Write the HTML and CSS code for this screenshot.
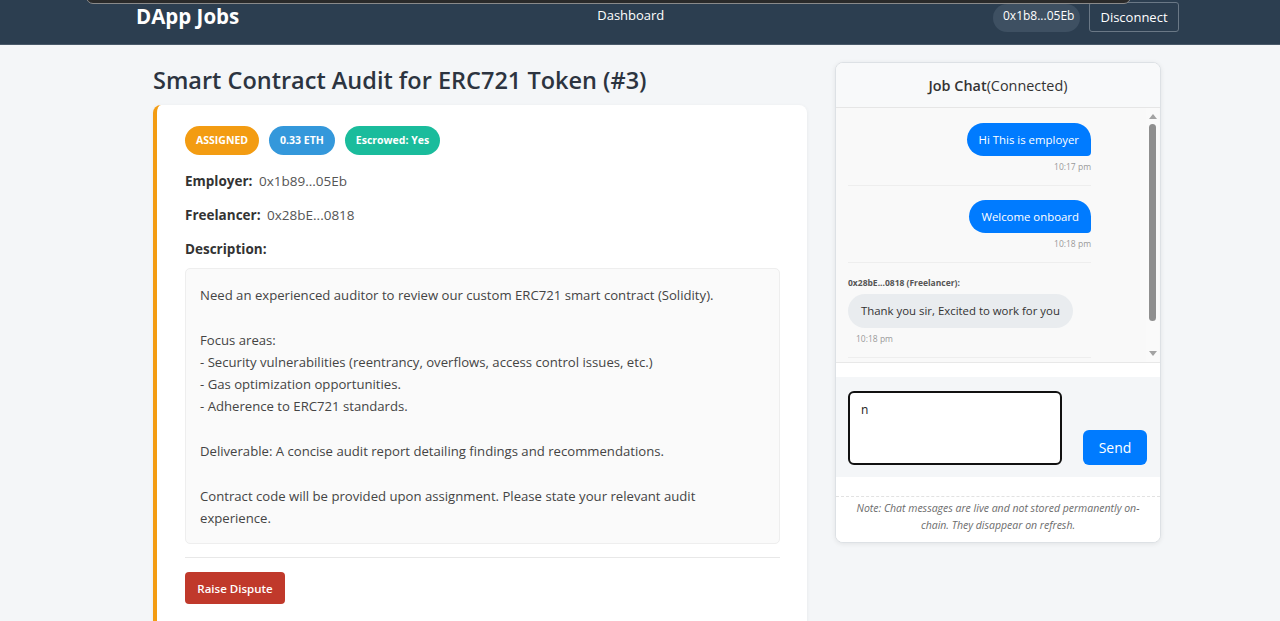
FILE: index.html
```html
<!DOCTYPE html>
<html lang="en">
<head>
<meta charset="utf-8">
<title>DApp Jobs</title>
<link rel="stylesheet" href="styles.css">
</head>
<body>
<div class="overlay-bar"></div>
<nav class="navbar">
  <div class="brand">DApp Jobs</div>
  <a class="nav-link">Dashboard</a>
  <div class="nav-right">
    <span class="addr-pill">0x1b8...05Eb</span>
    <button class="btn-disconnect">Disconnect</button>
  </div>
</nav>
<main class="page">
  <section class="job-col">
    <h1 class="job-title">Smart Contract Audit for ERC721 Token (#3)</h1>
    <div class="job-card">
      <div class="badges">
        <span class="badge badge-status">ASSIGNED</span>
        <span class="badge badge-eth">0.33 ETH</span>
        <span class="badge badge-escrow">Escrowed: Yes</span>
      </div>
      <p class="field"><strong>Employer:</strong> <span class="val">0x1b89...05Eb</span></p>
      <p class="field"><strong>Freelancer:</strong> <span class="val">0x28bE...0818</span></p>
      <p class="field field-last"><strong>Description:</strong></p>
      <div class="desc">Need an experienced auditor to review our custom ERC721 smart contract (Solidity).

Focus areas:
- Security vulnerabilities (reentrancy, overflows, access control issues, etc.)
- Gas optimization opportunities.
- Adherence to ERC721 standards.

Deliverable: A concise audit report detailing findings and recommendations.

Contract code will be provided upon assignment. Please state your relevant audit experience.</div>
      <hr class="divider">
      <button class="btn-dispute">Raise Dispute</button>
    </div>
  </section>
  <aside class="chat">
    <div class="chat-head"><strong>Job Chat</strong>(Connected)</div>
    <div class="chat-body">
      <div class="messages">
        <div class="msg msg-out">
          <div class="bubble">Hi This is employer</div>
          <div class="time">10:17 pm</div>
        </div>
        <div class="msg msg-out">
          <div class="bubble">Welcome onboard</div>
          <div class="time">10:18 pm</div>
        </div>
        <div class="msg msg-in">
          <div class="sender">0x28bE...0818 (Freelancer):</div>
          <div class="bubble">Thank you sir, Excited to work for you</div>
          <div class="time">10:18 pm</div>
        </div>
      </div>
      <div class="scrollbar">
        <span class="sb-up"></span>
        <span class="sb-thumb"></span>
        <span class="sb-down"></span>
      </div>
    </div>
    <div class="chat-gap"></div>
    <form class="chat-input">
      <textarea class="chat-text">n</textarea>
      <button type="button" class="btn-send">Send</button>
    </form>
    <div class="chat-gap2"></div>
    <p class="chat-note">Note: Chat messages are live and not stored permanently on-chain. They disappear on refresh.</p>
  </aside>
</main>
</body>
</html>
```
FILE: styles.css
```css
* { box-sizing: border-box; }
html, body { margin: 0; padding: 0; }
body {
  font-family: "Open Sans", "Noto Sans", sans-serif;
  background: #f4f6f8;
  color: #333;
  height: 621px;
  overflow: hidden;
  position: relative;
}
.overlay-bar {
  position: absolute;
  left: 86px;
  top: -10px;
  width: 1045px;
  height: 14px;
  background: #2a2a2a;
  border: 1px solid #8a8a8a;
  border-radius: 8px;
  z-index: 5;
}
.navbar {
  height: 45px;
  background: #2c3e50;
  border-bottom: 1px solid #4a5a6a;
  display: flex;
  align-items: center;
  padding: 0 101px 0 136px;
  color: #fff;
}
.brand {
  font-size: 20.5px;
  font-weight: 700;
  margin-top: -13px;
}
.nav-link {
  font-size: 13px;
  margin-left: 358px;
  margin-top: -14px;
  color: #fff;
}
.nav-right {
  margin-left: auto;
  display: flex;
  align-items: flex-start;
  gap: 9px;
  align-self: flex-start;
  margin-top: 2px;
}
.addr-pill {
  background: #3e5062;
  border-radius: 14px;
  font-size: 12px;
  padding: 4px 10px;
  height: 28px;
  line-height: 16px;
  width: 87px;
  text-align: center;
  margin-top: 2px;
}
.btn-disconnect {
  background: transparent;
  color: #fff;
  border: 1px solid #6a7886;
  border-radius: 3px;
  font-family: inherit;
  font-size: 13px;
  height: 30px;
  width: 90px;
  padding: 0;
  line-height: 24px;
}
.page {
  display: flex;
  align-items: flex-start;
  padding: 17px 0 0 153px;
  gap: 28px;
}
.job-col { width: 654px; }
.job-title {
  font-size: 23.5px;
  font-weight: 600;
  color: #2c3440;
  margin: 0 0 6px;
  line-height: 37px;
}
.job-card {
  background: #fff;
  border-left: 4px solid #f39c12;
  border-radius: 8px;
  box-shadow: 0 1px 4px rgba(0,0,0,0.06);
  padding: 21px 27px 40px 28px;
}
.badges { display: flex; gap: 10px; margin-bottom: 16px; }
.badge {
  display: inline-block;
  color: #fff;
  font-size: 10.5px;
  font-weight: 700;
  height: 29px;
  line-height: 29px;
  border-radius: 15px;
  padding: 0 11px;
}
.badge-status { background: #f39c12; }
.badge-eth { background: #3498db; }
.badge-escrow { background: #1abc9c; }
.field {
  margin: 0 0 14px;
  font-size: 13.5px;
  line-height: 20px;
  color: #333;
}
.field-last { margin-bottom: 9px; }
.field strong { margin-right: 3px; }
.val { color: #555; }
.desc {
  white-space: pre-wrap;
  background: #fafafa;
  border: 1px solid #eee;
  border-radius: 5px;
  padding: 15px 14px 14px;
  font-size: 13.15px;
  line-height: 22.3px;
  color: #444;
}
.divider {
  border: 0;
  border-top: 1px solid #e8e8e8;
  margin: 13px 0 14px;
}
.btn-dispute {
  background: #c0392b;
  color: #fff;
  border: 0;
  border-radius: 4px;
  font-family: inherit;
  font-size: 11.5px;
  font-weight: 600;
  height: 32px;
  width: 100px;
  padding: 0;
}
.chat {
  width: 326px;
  margin-top: 0;
  background: #fff;
  border: 1px solid #dde1e5;
  border-radius: 8px;
  box-shadow: 0 1px 5px rgba(0,0,0,0.08);
  overflow: hidden;
}
.chat-head {
  height: 45px;
  background: #f8f9fa;
  border-bottom: 1px solid #e6e6e6;
  text-align: center;
  font-size: 14.4px;
  line-height: 46px;
  color: #333;
}
.chat-head strong { font-weight: 600; }
.chat-body {
  height: 255px;
  display: flex;
  background: #f9f9f9;
  border-bottom: 1px solid #e8e8e8;
}
.messages {
  flex: 1;
  overflow: hidden;
  padding: 15px 0 0 12px;
}
.msg {
  width: 243px;
  padding-bottom: 12px;
  margin-bottom: 14px;
  border-bottom: 1px solid #eeeeee;
  display: flex;
  flex-direction: column;
}
.msg-out { align-items: flex-end; }
.msg-in { align-items: flex-start; }
.bubble {
  font-size: 11.4px;
  line-height: 33px;
  height: 33px;
  padding: 0 12px;
  border-radius: 17px 17px 4px 17px;
  background: #007bff;
  color: #fff;
}
.msg-in .bubble {
  background: #e9ecef;
  color: #333;
  height: 34px;
  line-height: 34px;
  padding: 0 13px;
  border-radius: 17px;
}
.time {
  font-size: 8.5px;
  color: #999;
  margin-top: 5px;
  line-height: 12px;
}
.msg-in .time { margin-left: 8px; }
.sender {
  font-size: 8.5px;
  font-weight: 700;
  color: #555;
  line-height: 12px;
  margin-bottom: 5px;
}
.scrollbar {
  width: 13px;
  background: #fafafa;
  display: flex;
  flex-direction: column;
  align-items: center;
  padding: 6px 0 6px;
  margin-right: 1px;
}
.sb-up, .sb-down {
  width: 0; height: 0;
  border-left: 4px solid transparent;
  border-right: 4px solid transparent;
}
.sb-up { border-bottom: 5px solid #a3a3a3; }
.sb-down { border-top: 5px solid #a3a3a3; margin-top: auto; }
.sb-thumb {
  width: 7px;
  height: 197px;
  background: #8f8f8f;
  border-radius: 4px;
  margin-top: 5px;
}
.chat-gap { height: 14px; background: #fff; }
.chat-input {
  margin: 0;
  height: 100px;
  background: #f4f6f8;
  display: flex;
  align-items: flex-end;
  padding: 14px 13px 12px 12px;
  gap: 21px;
}
.chat-text {
  width: 214px;
  height: 74px;
  resize: none;
  border: 2px solid #111;
  border-radius: 6px;
  font-family: inherit;
  font-size: 12px;
  padding: 8px 11px;
  background: #fff;
  color: #222;
  outline: none;
  align-self: flex-start;
}
.btn-send {
  width: 64px;
  height: 35px;
  background: #007bff;
  color: #fff;
  border: 0;
  border-radius: 6px;
  font-family: inherit;
  font-size: 14px;
  padding: 0;
}
.chat-gap2 { height: 19px; background: #fff; }
.chat-note {
  margin: 0;
  border-top: 1px dashed #e2e2e2;
  padding: 3px 12px 8px;
  font-size: 10.5px;
  font-style: italic;
  line-height: 17px;
  color: #6c6c6c;
  text-align: center;
  background: #fff;
}
```
